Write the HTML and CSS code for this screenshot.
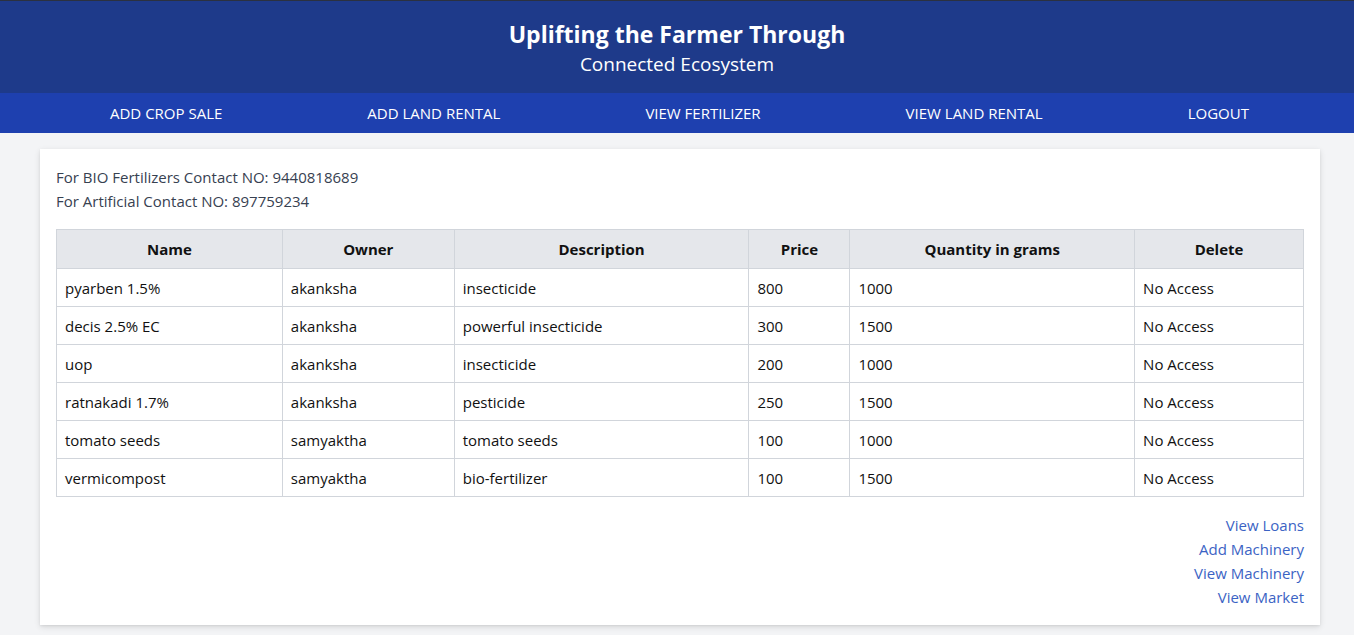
FILE: index.html
```html
<!DOCTYPE html>
<html lang="en">
<head>
<meta charset="utf-8">
<title>Fertilizers</title>
<link rel="stylesheet" href="styles.css">
</head>
<body>
<header class="site-header">
  <h1 class="title">Uplifting the Farmer Through</h1>
  <p class="subtitle">Connected Ecosystem</p>
</header>
<nav class="nav">
  <a class="nav-link" href="#">ADD CROP SALE</a>
  <a class="nav-link" href="#">ADD LAND RENTAL</a>
  <a class="nav-link" href="#">VIEW FERTILIZER</a>
  <a class="nav-link" href="#">VIEW LAND RENTAL</a>
  <a class="nav-link" href="#">LOGOUT</a>
</nav>
<main class="main">
  <section class="card">
    <p class="contact">For BIO Fertilizers Contact NO: 9440818689</p>
    <p class="contact">For Artificial Contact NO: 897759234</p>
    <table class="table">
      <colgroup>
        <col class="c-name"><col class="c-owner"><col class="c-desc"><col class="c-price"><col class="c-qty"><col class="c-del">
      </colgroup>
      <thead>
        <tr><th>Name</th><th>Owner</th><th>Description</th><th>Price</th><th>Quantity in grams</th><th>Delete</th></tr>
      </thead>
      <tbody>
        <tr><td>pyarben 1.5%</td><td>akanksha</td><td>insecticide</td><td>800</td><td>1000</td><td>No Access</td></tr>
        <tr><td>decis 2.5% EC</td><td>akanksha</td><td>powerful insecticide</td><td>300</td><td>1500</td><td>No Access</td></tr>
        <tr><td>uop</td><td>akanksha</td><td>insecticide</td><td>200</td><td>1000</td><td>No Access</td></tr>
        <tr><td>ratnakadi 1.7%</td><td>akanksha</td><td>pesticide</td><td>250</td><td>1500</td><td>No Access</td></tr>
        <tr><td>tomato seeds</td><td>samyaktha</td><td>tomato seeds</td><td>100</td><td>1000</td><td>No Access</td></tr>
        <tr><td>vermicompost</td><td>samyaktha</td><td>bio-fertilizer</td><td>100</td><td>1500</td><td>No Access</td></tr>
      </tbody>
    </table>
    <div class="links">
      <a class="link" href="#">View Loans</a>
      <a class="link" href="#">Add Machinery</a>
      <a class="link" href="#">View Machinery</a>
      <a class="link" href="#">View Market</a>
    </div>
  </section>
</main>
</body>
</html>
```

FILE: styles.css
```css
* { box-sizing: border-box; }
html, body { margin: 0; padding: 0; }
body {
  background: #f3f4f6;
  font-family: "Open Sans", "Noto Sans", sans-serif;
  font-size: 15px;
  line-height: 24px;
  color: #1f2328;
  height: 635px;
  overflow: hidden;
}
.site-header {
  background: #1e3a8a;
  border-top: 1px solid #2b3140;
  color: #fff;
  text-align: center;
  padding: 17px 0 15px;
}
.title {
  margin: 0;
  font-size: 23px;
  line-height: 32px;
  font-weight: 700;
}
.subtitle {
  margin: 0;
  font-size: 19px;
  line-height: 28px;
}
.nav {
  background: #1e40af;
  height: 40px;
  display: flex;
  align-items: center;
  justify-content: space-between;
  padding: 0 105px 0 110px;
}
.nav-link {
  color: #fff;
  text-decoration: none;
  font-size: 15px;
}
.main {
  padding: 16px 34px 0 40px;
}
.card {
  background: #fff;
  padding: 16px;
  box-shadow: 0 2px 6px rgba(0,0,0,0.12), 0 1px 2px rgba(0,0,0,0.06);
}
.contact {
  margin: 0;
  color: #374151;
}
.table {
  width: 100%;
  border-collapse: collapse;
  margin-top: 16px;
  color: #111;
}
.c-name { width: 226px; }
.c-owner { width: 172px; }
.c-desc { width: 295px; }
.c-price { width: 101px; }
.c-qty { width: 285px; }
.c-del { width: 169px; }
.table th, .table td {
  border: 1px solid #d1d5db;
  padding: 7px 8px 6px;
  text-align: left;
}
.table th {
  background: #e5e7eb;
  text-align: center;
  font-weight: 700;
  padding: 7px 8px;
}
.links {
  margin-top: 16px;
  display: flex;
  flex-direction: column;
  align-items: flex-end;
}
.link {
  color: #3b63c4;
  text-decoration: none;
}
```
